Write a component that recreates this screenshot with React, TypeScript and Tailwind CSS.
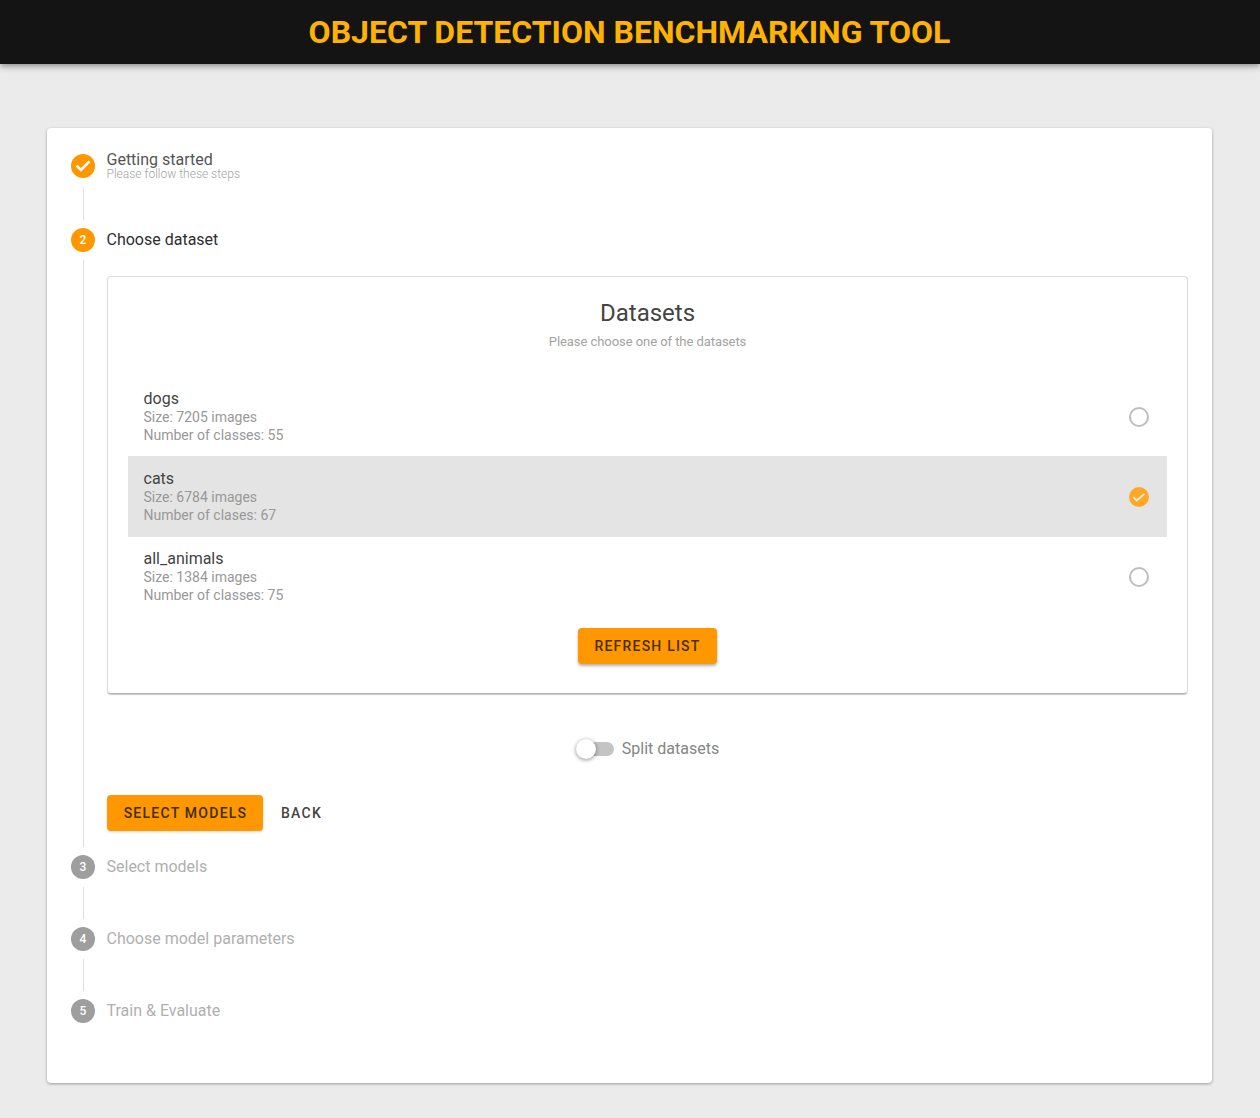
const datasets = [
  { name: 'dogs', size: 'Size: 7205 images', classes: 'Number of classes: 55', selected: false },
  { name: 'cats', size: 'Size: 6784 images', classes: 'Number of clases: 67', selected: true },
  { name: 'all_animals', size: 'Size: 1384 images', classes: 'Number of classes: 75', selected: false },
]

function StepNumber({ n, active }: { n: number; active?: boolean }) {
  return (
    <div className={`w-6 h-6 rounded-full flex items-center justify-center text-xs font-medium text-white shrink-0 ${active ? 'bg-[#ff9800]' : 'bg-[#9e9e9e]'}`}>
      {n}
    </div>
  )
}

function Connector() {
  return <div className="ml-3 my-2 h-8 w-px bg-[#dedede]" />
}

function DisabledStep({ n, label }: { n: number; label: string }) {
  return (
    <div className="flex items-center gap-[11.5px]">
      <StepNumber n={n} />
      <span className="text-base leading-6 text-[#b0b0b0]">{label}</span>
    </div>
  )
}

export default function App() {
  return (
    <div className="min-h-screen bg-[#ebebeb] font-['Roboto',sans-serif] pb-[35px]">
      {/* Header */}
      <header className="h-16 bg-[#141414] flex items-center justify-center shadow-[0_2px_4px_-1px_rgba(0,0,0,0.2),0_4px_5px_rgba(0,0,0,0.14),0_1px_10px_rgba(0,0,0,0.12)]">
        <h1 className="text-[32px] leading-none font-bold text-[#ffb300] uppercase -ml-px">Object Detection Benchmarking Tool</h1>
      </header>

      {/* Stepper card */}
      <div className="mt-16 mx-[47px] w-[1165px] bg-white rounded shadow-[0_1px_3px_rgba(0,0,0,0.35)] pt-6 pb-[60px] px-6">
        <div className="flex items-center gap-[11.5px] h-7">
          <svg viewBox="0 0 24 24" className="w-6 h-6 shrink-0">
            <circle cx="12" cy="12" r="12" fill="#ff9800" />
            <path d="M5.6 11.6l4.4 4.4 8.4-8.6" fill="none" stroke="white" strokeWidth="2.6" />
          </svg>
          <div>
            <div className="text-base leading-4 text-[#555555]">Getting started</div>
            <div className="text-xs leading-3 font-light text-[#a3a3a3]">Please follow these steps</div>
          </div>
        </div>
        <Connector />

        <div className="flex items-center gap-[11.5px]">
          <StepNumber n={2} active />
          <span className="text-base leading-6 text-[#2e2e2e]">Choose dataset</span>
        </div>

        <div className="mt-2 ml-3 border-l border-[#dedede] pl-[23px] pt-4 pb-4">
          <div className="border border-[#dcdcdc] border-b-[#b5b5b5] rounded shadow-[0_1px_1px_rgba(0,0,0,0.22)] px-5 pt-[20px] pb-[29px]">
            <h2 className="text-2xl leading-8 text-center text-[#444444]">Datasets</h2>
            <p className="mt-[3px] text-[13px] leading-5 tracking-[-0.06px] text-center text-[#a3a3a3]">Please choose one of the datasets</p>
            <div className="mt-[25px]">
              {datasets.map((d) => (
                <div key={d.name} className={`pl-[15.5px] pr-[18px] flex items-center justify-between ${d.selected ? 'h-[81px] -mt-px pt-px bg-[#e4e4e4]' : 'h-20'}`}>
                  <div className="pb-px">
                    <div className="text-base leading-[19px] text-[#444444]">{d.name}</div>
                    <div className="text-sm leading-[18px] text-[#989898]">{d.size}</div>
                    <div className="text-sm leading-[18px] text-[#989898]">{d.classes}</div>
                  </div>
                  {d.selected ? (
                    <svg viewBox="0 0 21 21" className="w-5 h-5">
                      <circle cx="10.5" cy="10.5" r="10.5" fill="#ffa726" />
                      <path d="M4.5 10.6l3.6 3.6 8.2-7" fill="none" stroke="#f0ebe0" strokeWidth="1.8" />
                    </svg>
                  ) : (
                    <div className="w-5 h-5 rounded-full border-2 border-[#bdbdbd]" />
                  )}
                </div>
              ))}
            </div>
            <div className="mt-[11px] flex justify-center">
              <button className="h-9 w-[139px] rounded bg-[#ff9800] text-sm font-medium tracking-[1.2px] text-[#4a2e00] shadow-[0_2px_3px_rgba(0,0,0,0.3)]">
                REFRESH LIST
              </button>
            </div>
          </div>

          <div className="mt-[43px] flex items-center justify-center gap-2 h-6">
            <div className="relative w-[38px] h-6 flex items-center">
              <div className="ml-[4px] w-[34px] h-[14px] rounded-full bg-[#c4c4c4]" />
              <div className="absolute left-0 top-[2px] w-5 h-5 rounded-full bg-white shadow-[0_1px_4px_rgba(0,0,0,0.45)]" />
            </div>
            <span className="text-base leading-6 text-[#858585]">Split datasets</span>
          </div>

          <div className="mt-[34px] flex items-center gap-2">
            <button className="h-9 w-[156px] pl-px rounded bg-[#ff9800] text-sm font-medium tracking-[1.25px] text-[#3d2d0a] shadow-[0_1px_3px_rgba(0,0,0,0.15)]">
              SELECT MODELS
            </button>
            <button className="h-9 px-[10px] text-sm font-medium tracking-[1.25px] text-[#444444]">BACK</button>
          </div>
        </div>

        <div className="mt-2">
          <DisabledStep n={3} label="Select models" />
        </div>
        <Connector />
        <DisabledStep n={4} label="Choose model parameters" />
        <Connector />
        <DisabledStep n={5} label="Train & Evaluate" />
      </div>
    </div>
  )
}
